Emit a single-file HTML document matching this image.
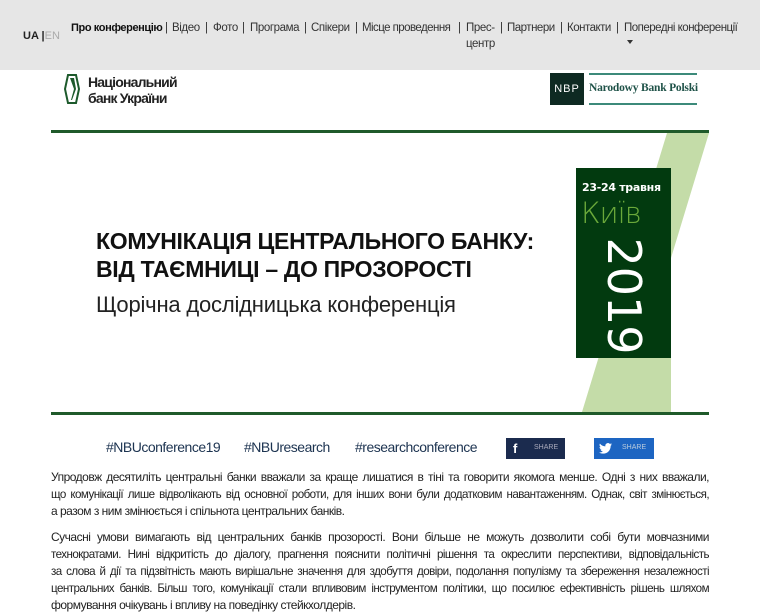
<!DOCTYPE html>
<html><head><meta charset="utf-8">
<style>
*{margin:0;padding:0;box-sizing:border-box}
body{width:760px;height:600px;overflow:hidden;background:#fff;font-family:"Liberation Sans",Arial,sans-serif;color:#222;position:relative}
.hdr{position:absolute;left:0;top:0;width:760px;height:70px;background:#e6e6e6}
.lang{position:absolute;left:23px;top:30px;font-size:11px;font-weight:bold;color:#222}
.lang span{color:#aaa;font-weight:normal}
.n{position:absolute;top:20px;font-size:11.5px;color:#333;line-height:16px;white-space:nowrap;letter-spacing:-0.4px}
.abs{position:absolute}
.p{position:absolute;left:51px;width:658px;font-size:12px;line-height:17px;color:#222;letter-spacing:-0.5px}
.p div{text-align:justify;text-align-last:justify;height:17px;overflow:hidden}
.p div.t{font-size:11.6px;letter-spacing:-0.55px}
.p div.l{text-align-last:left}
</style></head><body>
<div class="hdr"></div>
<div class="lang">UA |<span>EN</span></div>
<div class="n" style="left:71px;font-weight:bold;color:#111;font-size:11px;letter-spacing:-0.4px">Про конференцію</div>
<div class="n" style="left:165px">|</div>
<div class="n" style="left:172px">Відео</div>
<div class="n" style="left:205px">|</div>
<div class="n" style="left:213px">Фото</div>
<div class="n" style="left:242px">|</div>
<div class="n" style="left:250px">Програма</div>
<div class="n" style="left:304px">|</div>
<div class="n" style="left:311px">Спікери</div>
<div class="n" style="left:355px">|</div>
<div class="n" style="left:362px;letter-spacing:-0.55px">Місце проведення</div>
<div class="n" style="left:458px">|</div>
<div class="n" style="left:466px">Прес-</div>
<div class="n" style="left:500px">|</div>
<div class="n" style="left:507px;letter-spacing:-0.5px">Партнери</div>
<div class="n" style="left:560px">|</div>
<div class="n" style="left:567px;letter-spacing:-0.5px">Контакти</div>
<div class="n" style="left:616px">|</div>
<div class="n" style="left:624px;letter-spacing:-0.5px">Попередні конференції</div>
<div class="n" style="left:466px;top:36px">центр</div>
<div class="abs" style="left:627px;top:40px;width:0;height:0;border-left:3px solid transparent;border-right:3px solid transparent;border-top:4px solid #333"></div>

<svg class="abs" style="left:64px;top:74px" width="16" height="30" viewBox="0 0 16 30"><path d="M4 1 H12 L15 15 L12 29 H4 L1 15 Z" fill="none" stroke="#1d5a2c" stroke-width="2"/><path d="M6 4 H10 L12 15 L8 26 H7 L10 15 Z" fill="#1d5a2c"/></svg>
<div class="abs" style="left:88px;top:74px;font-size:14px;line-height:16px;color:#222;font-weight:bold;letter-spacing:-0.8px">Національний<br>банк України</div>

<div class="abs" style="left:550px;top:73px;width:34px;height:32px;background:#0e2a22;color:#fff;font-size:11px;line-height:32px;text-align:center;letter-spacing:1px">NBP</div>
<div class="abs" style="left:589px;top:73px;width:108px;height:2px;background:#3c8a7a"></div>
<div class="abs" style="left:589px;top:103px;width:108px;height:2px;background:#3c8a7a"></div>
<div class="abs" style="left:589px;top:82px;font-family:'Liberation Serif',serif;font-size:11.5px;font-weight:bold;color:#1f5248;letter-spacing:-0.2px">Narodowy Bank Polski</div>

<div class="abs" style="left:51px;top:130px;width:658px;height:3px;background:#1f5a2a"></div>
<svg class="abs" style="left:0;top:0" width="760" height="420"><polygon points="667,133 709,133 671,258 671,412 582,412" fill="#c4dca8"/></svg>
<div class="abs" style="left:576px;top:168px;width:95px;height:190px;background:#023a0f"></div>
<div class="abs" style="left:582px;top:181px;font-family:'DejaVu Sans',sans-serif;font-size:11px;color:#fff;font-weight:bold;letter-spacing:-0.3px">23-24 травня</div>
<div class="abs" style="left:581px;top:196px;font-family:'DejaVu Sans',sans-serif;font-size:29px;color:#6aa83a;font-weight:200;letter-spacing:-1px">Київ</div>
<div class="abs" style="left:624px;top:296px;transform:translate(-50%,-50%) rotate(90deg);font-family:'DejaVu Sans',sans-serif;font-size:46px;color:#fff;white-space:nowrap">2019</div>
<div class="abs" style="left:51px;top:412px;width:658px;height:3px;background:#1f5a2a"></div>

<div class="abs" style="left:96px;top:227px;font-size:23px;font-weight:bold;line-height:28px;color:#111;letter-spacing:-0.3px">КОМУНІКАЦІЯ ЦЕНТРАЛЬНОГО БАНКУ:<br>ВІД ТАЄМНИЦІ – ДО ПРОЗОРОСТІ</div>
<div class="abs" style="left:96px;top:292px;font-size:22px;color:#222;letter-spacing:-0.2px">Щорічна дослідницька конференція</div>

<div class="abs" style="left:106px;top:439px;font-size:14px;color:#1c3350;letter-spacing:-0.5px">#NBUconference19</div>
<div class="abs" style="left:244px;top:439px;font-size:14px;color:#1c3350;letter-spacing:-0.5px">#NBUresearch</div>
<div class="abs" style="left:355px;top:439px;font-size:14px;color:#1c3350;letter-spacing:-0.5px">#researchconference</div>
<div class="abs" style="left:506px;top:438px;width:59px;height:21px;background:#1b2b4e"><span style="position:absolute;left:7px;top:3px;color:#fff;font-weight:bold;font-size:13px">f</span><span style="position:absolute;left:28px;top:6px;color:#aab;font-size:7px">SHARE</span></div>
<div class="abs" style="left:594px;top:438px;width:60px;height:21px;background:#1d65c2"><svg style="position:absolute;left:5px;top:5px" width="13" height="11" viewBox="0 0 24 20"><path d="M24 2.4a10 10 0 0 1-2.8.8A5 5 0 0 0 23.3.4a10 10 0 0 1-3.1 1.2A4.9 4.9 0 0 0 11.8 6 14 14 0 0 1 1.7.9a4.9 4.9 0 0 0 1.5 6.6A5 5 0 0 1 1 6.9a4.9 4.9 0 0 0 3.9 4.8 5 5 0 0 1-2.2.1 4.9 4.9 0 0 0 4.6 3.4A9.9 9.9 0 0 1 0 17.3 14 14 0 0 0 7.5 19.5c9.1 0 14-7.5 14-14v-.6A10 10 0 0 0 24 2.4z" fill="#fff"/></svg><span style="position:absolute;left:28px;top:6px;color:#bcd;font-size:7px">SHARE</span></div>

<div class="p" style="top:469px">
<div>Упродовж десятиліть центральні банки вважали за краще лишатися в тіні та говорити якомога менше. Одні з них вважали,</div>
<div class="t">що комунікації лише відволікають від основної роботи, для інших вони були додатковим навантаженням. Однак, світ змінюється,</div>
<div class="l">а разом з ним змінюється і спільнота центральних банків.</div>
</div>
<div class="p" style="top:529px">
<div>Сучасні умови вимагають від центральних банків прозорості. Вони більше не можуть дозволити собі бути мовчазними</div>
<div class="t">технократами. Нині відкритість до діалогу, прагнення пояснити політичні рішення та окреслити перспективи, відповідальність</div>
<div class="t">за слова й дії та підзвітність мають вирішальне значення для здобуття довіри, подолання популізму та збереження незалежності</div>
<div class="t">центральних банків. Більш того, комунікації стали впливовим інструментом політики, що посилює ефективність рішень шляхом</div>
<div class="l">формування очікувань і впливу на поведінку стейкхолдерів.</div>
</div>
</body></html>
